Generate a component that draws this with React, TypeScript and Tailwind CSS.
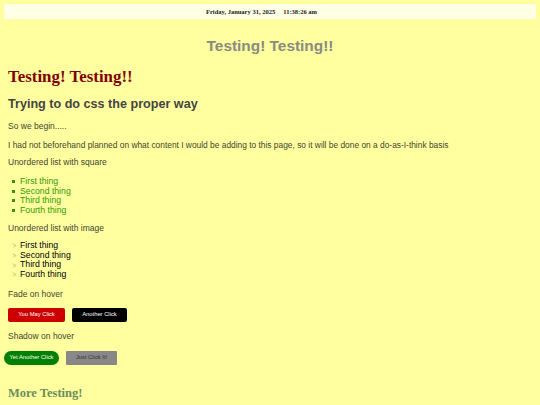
import React from "react";

const serif = { fontFamily: '"Liberation Serif", "Times New Roman", serif' };

function ArrowBullet() {
  return (
    <svg width="5" height="5" viewBox="0 0 12 12" className="mr-[3px] shrink-0">
      <path d="M2 2 L7 6 L3 10 M5 3 L10 6 L6 9" fill="none" stroke="#d8c080" strokeWidth="1.8" strokeLinecap="round" />
    </svg>
  );
}

const items = ["First thing", "Second thing", "Third thing", "Fourth thing"];

export default function App() {
  return (
    <div
      className="w-[540px] h-[405px] overflow-hidden bg-[#ffffa0] text-[#44442e]"
      style={{ fontFamily: '"Liberation Sans", Arial, sans-serif' }}
    >
      <div className="mx-[4px] mt-[4px] h-[15px] bg-[#ffffe6] flex items-center justify-center pr-[17px]">
        <span className="text-[6.5px] font-bold text-[#222] whitespace-pre" style={serif}>
          {"Friday, January 31, 2025     11:38:26 am"}
        </span>
      </div>

      <div className="mt-[17px] text-center text-[15.4px] leading-[20px] font-bold text-[#8a8a80]">
        Testing! Testing!!
      </div>

      <div className="px-[8px]">
        <h1 className="mt-[11px] text-[16.9px] leading-[20px] font-bold text-[#800000]" style={serif}>
          Testing! Testing!!
        </h1>
        <h2 className="mt-[9px] text-[12.6px] leading-[16px] font-bold text-[#444444]">
          Trying to do css the proper way
        </h2>
        <p className="mt-[9px] text-[8.5px] leading-[10px]">So we begin.....</p>
        <p className="mt-[9px] text-[8.4px] leading-[10px]">
          I had not beforehand planned on what content I would be adding to this page, so it will be done on a do-as-I-think basis
        </p>
        <p className="mt-[7px] text-[8.5px] leading-[10px]">Unordered list with square</p>

        <ul className="mt-[10px] pl-[4px] text-[8.7px] leading-[9.5px] text-[#339900]">
          {items.map((t) => (
            <li key={t} className="flex items-center">
              <span className="w-[3px] h-[3px] bg-[#339900] mr-[5px]" />
              {t}
            </li>
          ))}
        </ul>

        <p className="mt-[8px] text-[8.5px] leading-[10px]">Unordered list with image</p>

        <ul className="mt-[8px] pl-[4px] text-[8.7px] leading-[9.7px] text-black">
          {items.map((t) => (
            <li key={t} className="flex items-center">
              <ArrowBullet />
              {t}
            </li>
          ))}
        </ul>

        <p className="mt-[9px] text-[8.5px] leading-[10px]">Fade on hover</p>
        <div className="mt-[9px] flex gap-[7px]">
          <button className="w-[57px] h-[14px] rounded-[2px] bg-[#cc0000] text-white text-[5.8px] flex items-center justify-center">
            You May Click
          </button>
          <button className="w-[55px] h-[14px] rounded-[2px] bg-black text-white text-[5.8px] flex items-center justify-center">
            Another Click
          </button>
        </div>

        <p className="mt-[9px] text-[8.5px] leading-[10px]">Shadow on hover</p>
      </div>

      <div className="mt-[10px] pl-[4px] flex gap-[7px]">
        <button className="w-[55px] h-[14px] rounded-full bg-[#008000] text-white text-[5.8px] flex items-center justify-center">
          Yet Another Click
        </button>
        <button className="w-[51px] h-[14px] rounded-[1px] bg-[#888888] text-[#333] text-[5.8px] flex items-center justify-center">
          Just Click It!
        </button>
      </div>

      <h3 className="mt-[20px] px-[8px] text-[12.5px] leading-[16px] font-bold text-[#6b8e5b]" style={serif}>
        More Testing!
      </h3>
    </div>
  );
}
